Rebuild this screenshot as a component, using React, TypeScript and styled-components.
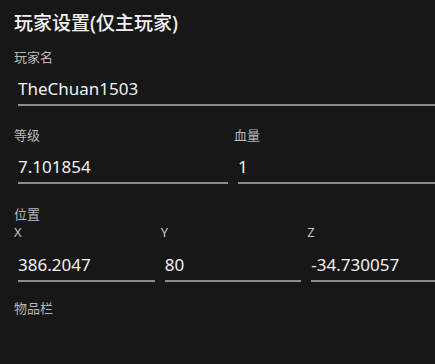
import React from "react";
import styled, { createGlobalStyle } from "styled-components";

const Global = createGlobalStyle`
  html, body {
    margin: 0;
    padding: 0;
    background: #171717;
    overflow: hidden;
  }
  body {
    font-family: "Noto Sans", "Noto Sans CJK SC", sans-serif;
  }
`;

const Page = styled.div`
  width: 440px;
  padding: 9px 0 0 14px;
  box-sizing: content-box;
`;

const Title = styled.h1`
  margin: 0 0 12px;
  font-size: 19px;
  line-height: 28px;
  font-weight: 500;
  color: #f3f3f3;
  white-space: nowrap;
`;

const Section = styled.section<{ $gap?: number }>`
  margin-bottom: ${(p) => p.$gap ?? 21}px;
`;

const Label = styled.div<{ $sub?: boolean }>`
  font-size: 13px;
  line-height: 16px;
  color: ${(p) => (p.$sub ? "#c4c4c4" : "#b8b8b8")};
  margin-top: ${(p) => (p.$sub ? 2 : 0)}px;
`;

const Grid = styled.div<{ $cols: number }>`
  display: grid;
  grid-template-columns: repeat(${(p) => p.$cols}, 1fr);
`;

const Input = styled.input<{ $top?: number }>`
  display: block;
  box-sizing: border-box;
  width: calc(100% - 10px);
  margin: 0 6px 0 4px;
  padding: ${(p) => p.$top ?? 12}px 0 3px;
  border: none;
  border-bottom: 2px solid #8e8e8e;
  background: transparent;
  outline: none;
  font-family: "Noto Sans", "Noto Sans CJK SC", sans-serif;
  font-size: 17px;
  line-height: 24px;
  height: auto;
  color: #f2f2f2;
`;

const Field: React.FC<{ label: string; value: string; sub?: boolean; top?: number }> = ({
  label,
  value,
  sub,
  top,
}) => (
  <div>
    <Label $sub={sub}>{label}</Label>
    <Input $top={top} defaultValue={value} readOnly />
  </div>
);

export default function App() {
  return (
    <>
      <Global />
      <Page>
        <Title>玩家设置(仅主玩家)</Title>
        <Section>
          <Field label="玩家名" value="TheChuan1503" />
        </Section>
        <Section $gap={22}>
          <Grid $cols={2}>
            <Field label="等级" value="7.101854" />
            <Field label="血量" value="1" />
          </Grid>
        </Section>
        <Section $gap={18}>
          <Label>位置</Label>
          <Grid $cols={3}>
            <Field sub label="X" value="386.2047" top={13} />
            <Field sub label="Y" value="80" top={13} />
            <Field sub label="Z" value="-34.730057" top={13} />
          </Grid>
        </Section>
        <Label>物品栏</Label>
      </Page>
    </>
  );
}
